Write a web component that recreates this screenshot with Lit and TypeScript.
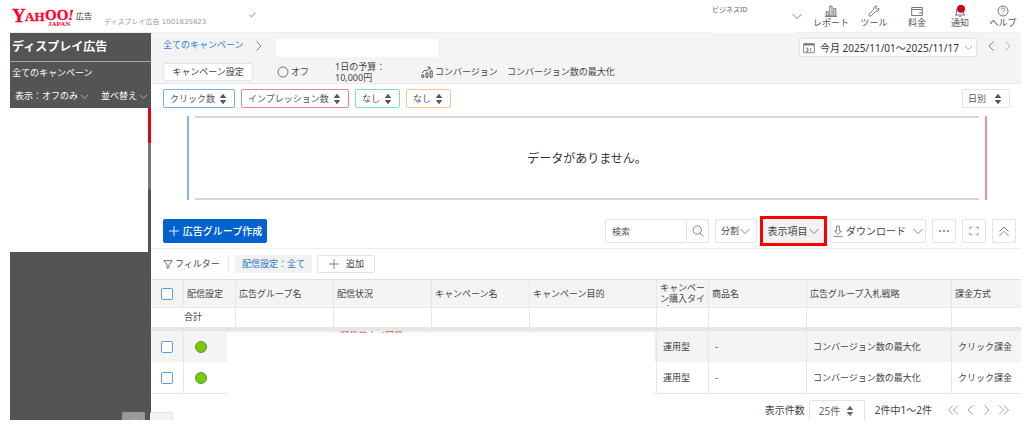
import { LitElement, html, css, svg, nothing } from "lit";
import { customElement, property } from "lit/decorators.js";

const shapes: Record<string, unknown> = {
  down: svg`<path d="M1.5 4 6 8.500 10.5 4"/>`,
  left: svg`<path d="M8.5 1.5 4 6l4.500 4.500"/>`,
  right: svg`<path d="M3.500 1.500 8 6l-4.500 4.500"/>`,
  first: svg`<path d="M6 1.500 1.500 6 6 10.500M11 1.500 6.500 6l4.500 4.500"/>`,
  last: svg`<path d="M1 1.500 5.500 6 1 10.500M6 1.500 10.500 6 6 10.500"/>`,
  top: svg`<path d="M1.500 6.500 6 2l4.500 4.500M1.500 10.800 6 6.300l4.500 4.500"/>`,
  check: svg`<path d="M2 6.500 5 9l5-6"/>`,
  plus: svg`<path d="M6 1v10M1 6h10"/>`,
  sort: svg`<path d="M6 .8 9.300 4.900H2.700zM6 11.200 2.700 7.100h6.600z" fill="currentColor" stroke="none"/>`,
  circle: svg`<circle cx="6" cy="6" r="5"/>`,
  search: svg`<circle cx="5.200" cy="5" r="4.200"/><path d="m8.200 8.200 3.300 3.300"/>`,
  filter: svg`<path d="M1 2h10L7.400 6.800v3L4.800 11.300V6.800z"/>`,
  download: svg`<path d="M4.600 1v5H2.500L6 9.500 9.500 6H7.400V1zM1.500 11.400h9"/>`,
  dots: svg`<path d="M1 6h2M5 6h2M9 6h2" stroke-width="1.300"/>`,
  full: svg`<path d="M1 4V1.500h3M8 1.500h3V4M11 8v2.500H8M4 10.500H1V8"/>`,
  report: svg`<path d="M1.200 6.500h2v4.500h-2zM4.800 1h2.200v10H4.800zM8.800 3.500h2V11h-2zM0 11.400h12"/>`,
  tool: svg`<path d="M10.800 3.200 9 4.500 7.500 3 8.900 1.200C7 .6 5.200 2 5.700 4.300L1 9.200c-.8 1 .8 2.600 1.800 1.800l4.900-4.700c2.300.5 3.900-1.200 3.100-3.100z"/>`,
  card: svg`<path d="M.7 2.500h10.600v8H.7zM.7 4.500h10.600M8 8h3"/>`,
  bell: svg`<path d="M2.500 9V5.500C2.500 1 9.500 1 9.500 5.500V9l1.300 1H1.200zM4.800 11.300h2.400"/><circle cx="7" cy="3.800" r="4" fill="#d0021b" stroke="none"/>`,
  help: svg`<circle cx="6" cy="6" r="5"/><path d="M4.300 4.700c0-2.200 3.400-2.200 3.400 0C7.700 6 6 5.800 6 7.200M6 8.400v1"/>`,
  calendar: svg`<path d="M.7 1.800h10.600v9H.7z"/><path d="M.7 2.500h10.600" stroke-width="2"/><path d="M3 6.200h2v3.300H3M3.500 7.800H5M7.700 6v3.700"/>`,
  trend: svg`<path d="M.8 9h2v2.300h-2zM5 7h2v4.300H5zM9.200 5h2v6.300h-2zM1 7l3-3 1.500 1.200L9 1.500M6.500 1.200H9v2.400"/>`,
};

@customElement("ui-icon")
class UiIcon extends LitElement {
  @property() name = "down";
  static styles = css`
    :host { display: inline-flex; flex: none; width: 12px; height: 12px; }
    svg { width: 100%; height: 100%; fill: none; stroke: currentColor; stroke-width: 0.9; }
  `;
  render() {
    return html`<svg viewBox="0 0 12 12" aria-hidden="true">${shapes[this.name]}</svg>`;
  }
}

const nav = [
  ["report", "レポート"],
  ["tool", "ツール"],
  ["card", "料金"],
  ["bell", "通知"],
  ["help", "ヘルプ"],
];

const metrics = [
  ["クリック数", "blue"],
  ["インプレッション数", "pink"],
  ["なし", "teal"],
  ["なし", "orange"],
];

const columns = [
  ["配信設定", "c-set"],
  ["広告グループ名", "c-name"],
  ["配信状況", "c-mid"],
  ["キャンペーン名", "c-mid"],
  ["キャンペーン目的", "c-goal"],
  ["キャンペーン購入タイプ", "c-type"],
  ["商品名", "c-mid"],
  ["広告グループ入札戦略", "c-bid"],
  ["課金方式", "c-pay"],
];

const rows = [
  { status: "配信停止（配信", type: "運用型", product: "-", bid: "コンバージョン数の最大化", pay: "クリック課金" },
  { status: "", type: "運用型", product: "-", bid: "コンバージョン数の最大化", pay: "クリック課金" },
];

@customElement("app-root")
class AppRoot extends LitElement {
  static styles = css`
    :host {
      display: block;
      padding: 0 3px 0 10px;
      background: #fff;
      color: #444;
      font: 9px/12px "Noto Sans", "Noto Sans CJK JP", sans-serif;
    }
    * { box-sizing: border-box; }
    button, select, input { margin: 0; font: inherit; color: inherit; border-radius: 2px; }
    button { display: flex; align-items: center; justify-content: center; padding: 0; background: #fff; border: 1px solid #e3e3e3; white-space: nowrap; }
    button ui-icon { color: #777; }
    a { color: inherit; text-decoration: none; }
    .plain { border: 0; background: none; }
    .icon9 { width: 9px; height: 9px; }
    .icon10 { width: 10px; height: 10px; }
    .spacer { flex: 1; }

    header { display: flex; height: 33px; border-bottom: 1px solid #eee; color: #555; }
    .logo { width: 64px; height: 24px; margin: 7px 0 0 2px; overflow: visible; }
    .brand { margin: 10px 0 0; font-size: 8px; color: #333; }
    .account { margin: 16px 0 0 12px; font-family: "DejaVu Sans", "Noto Sans CJK JP", sans-serif; font-size: 7px; color: #999; }
    .account-check { margin: 10px 0 0 42px; width: 9px; height: 9px; }
    .business { width: 82px; height: 34px; padding-top: 4px; background: #fff; font-size: 7px; color: #666; white-space: nowrap; }
    .business-more { margin: 10px 10px 0 -3px; height: 12px; }
    nav { display: flex; gap: 7px; }
    nav a { display: flex; flex-direction: column; align-items: center; width: 36px; padding-top: 5px; line-height: 11px; white-space: nowrap; }
    nav ui-icon { color: #666; }

    .body { position: relative; display: grid; grid-template-columns: 141px minmax(0, 1fr); }
    aside { display: flex; flex-direction: column; background: #545454; color: #fff; }
    aside button ui-icon { color: #ddd; }
    h1 { margin: 0; padding: 5px 2px; height: 29px; font-size: 12px; line-height: 18px; border-bottom: 1px solid #a5a5a5; }
    .all { padding: 5px 2px 6px; height: 23px; }
    .side-tools { display: flex; justify-content: space-between; padding: 5px 3px 0 5px; height: 23px; }
    .side-tools button { height: 12px; gap: 2px; }
    .side-list { display: grid; grid-template-columns: 1fr 3px; height: 144px; background: #fff; }
    .scroll { display: flex; flex-direction: column; background: #545454; }
    .scroll-hot { height: 35px; background: #e60012; }
    .scroll-thumb { height: 46px; background: #777; }

    .campaign { height: 51px; background: #f4f4f4; border-bottom: 1px solid #e8e8e8; padding: 5px 5px 0 12px; }
    .crumbs, .facts, .metrics, .toolbar, .filters, .pager { display: flex; align-items: center; }
    .crumbs { height: 19px; }
    .crumbs a { color: #2f7fd0; padding-bottom: 6px; }
    .crumbs .sep { margin: 0 11px 4px 9px; color: #777; }
    .blank { width: 162px; height: 18px; background: #fff; }
    .date { height: 19px; padding: 0 3px; font-size: 10px; gap: 5px; margin-right: 5px; color: #333; }
    .step { width: 17px; height: 12px; margin-bottom: 3px; }
    .step.off ui-icon { color: #aaa; }
    .facts { height: 29px; padding-top: 1px; }
    .settings { width: 90px; height: 18px; }
    .state { display: flex; align-items: center; gap: 2px; margin-left: 24px; width: 58px; }
    .state ui-icon { color: #666; }
    .budget { width: 86px; line-height: 11px; }
    .goal { display: flex; align-items: center; gap: 2px; width: 86px; white-space: nowrap; }

    .metrics { padding: 5px 11px 4px 12px; gap: 6px; height: 28px; }
    .pick { position: relative; display: inline-flex; align-items: center; height: 19px; border: 1px solid #e3e3e3; border-radius: 2px; background: #fff; color: #555; }
    .pick select { appearance: none; height: 100%; border: 0; background: none; padding: 0 18px 0 6px; outline: none; }
    .pick ui-icon { position: absolute; right: 5px; pointer-events: none; }
    .pick.blue { border-color: #76b1e8; }
    .pick.pink { border-color: #f07f9b; }
    .pick.teal { border-color: #76dede; }
    .pick.orange { border-color: #f8c68c; }
    .pick.wide select { padding: 0 22px 0 5px; }

    .chart { display: flex; justify-content: space-between; gap: 6px; margin: 4px 34px 19px 36px; height: 84px; }
    .axis { width: 2px; background: #7fb5e6; }
    .axis.alt { background: #f28ba6; }
    .plot { flex: 1; display: grid; place-items: center; padding-top: 1px; border: solid #d5d5d5; border-width: 2px 0; font-size: 12px; color: #333; }

    .toolbar { gap: 6px; padding: 0 5px 0 12px; height: 30px; align-items: flex-start; border-bottom: 1px solid #eee; }
    .toolbar button { height: 24px; }
    .toolbar .create { width: 104px; background: #0062ce; border-color: #0062ce; color: #fff; font-size: 10px; font-weight: 500; gap: 3px; }
    .toolbar .create ui-icon { color: #fff; }
    .search { display: flex; }
    .search input { width: 81px; height: 24px; padding: 0 6px; border: 1px solid #e3e3e3; border-right: 0; border-radius: 2px 0 0 2px; outline: none; }
    .search input::placeholder { color: #555; opacity: 1; }
    .search button { width: 23px; }
    .toolbar .split { width: 42px; }
    .toolbar .items { width: 61px; background: #f2f2f2; font-size: 10px; outline: 3px solid #f00; border-color: #f2f2f2; border-radius: 0; }
    .toolbar .load { width: 96px; font-size: 10px; gap: 2px; }
    .load .more { margin-left: 4px; }
    .toolbar .square { width: 24px; }

    .filters { height: 30px; padding: 0 12px; }
    .filter-label { display: flex; align-items: center; gap: 2px; width: 66px; height: 18px; border-right: 1px solid #e8e8e8; }
    .chip { width: 77px; height: 18px; margin: 0 5px 0 6px; background: #f2f2f2; border: 0; color: #2676cc; }
    .add { width: 58px; height: 18px; gap: 6px; font-size: 9px; }

    .grid { position: relative; }
    table { width: 100%; table-layout: fixed; border-collapse: separate; border-spacing: 0; }
    th, td { padding: 0 0 0 3px; border-right: 1px solid #e6e6e6; font-weight: 400; text-align: left; white-space: nowrap; }
    th:last-child, td:last-child { border-right: 0; }
    thead th { height: 29px; background: #f4f4f4; border-top: 1px solid #e0e0e0; border-bottom: 1px solid #e8e8e8; }
    .c-box { width: 33px; }
    .c-set { width: 52px; }
    .c-name { width: 98px; }
    .c-mid { width: 98px; }
    .c-goal { width: 127px; }
    .c-type { width: 52px; }
    .c-bid { width: 145px; }
    .clamp { height: 25px; padding-top: 1px; line-height: 11px; overflow: hidden; white-space: normal; }
    .total td { height: 23px; border-bottom: 4px solid #e6e6e6; }
    .total .sum { padding: 0 0 2px 33px; }
    .row td { height: 31px; padding-left: 6px; }
    .row.odd td { background: #f4f4f4; }
    .row.even td { height: 32px; border-bottom: 1px solid #e6e6e6; }
    .row td.status { vertical-align: top; color: #e2332e; line-height: 9px; }
    th.c-box, .row td.c-box, .row td.dot { padding: 0; text-align: center; }
    .row td.dot { padding-right: 18px; border-right: 0; }
    input[type="checkbox"] { appearance: none; display: block; width: 12px; height: 12px; margin: auto; border: 1px solid #5b9ce0; background: #fff; }
    .on { display: block; width: 12px; height: 12px; margin: auto; border-radius: 50%; background: #76cc00; border: 1px solid #6a8a48; }
    .hidden-cells { position: absolute; left: 76px; top: 54px; bottom: 0; width: 427px; background: #fff; }

    .pager { height: 26px; padding: 6px 12px 0; justify-content: flex-end; overflow: hidden; font-size: 10px; }
    .pager .pick { height: 20px; margin: 0 10px 0 4px; border-bottom: 0; border-radius: 2px 2px 0 0; color: #666; }
    .pager .pick select { padding: 0 23px 0 9px; }
    .pager .pick ui-icon { right: 8px; }
    .pages { display: flex; gap: 7px; margin-left: 16px; }
    .pages button { width: 10px; height: 12px; }
    .pages ui-icon { color: #999; }
    .tabs { position: absolute; left: 112px; bottom: 0; display: flex; gap: 5px; }
    .tab { width: 23px; height: 8px; align-items: flex-start; overflow: hidden; border: 0; background: #999; border-radius: 2px 2px 0 0; }
    .tab.light { background: #f4f4f4; border: solid #e3e3e3; border-width: 1px 1px 0 0; }
    .tab ui-icon { margin-top: 5px; width: 8px; height: 8px; color: #ccc; }
  `;

  private pick(label: string, name: string, tone = "") {
    return html`<span class="pick ${tone}">
      <select aria-label=${name}><option>${label}</option></select>
      <ui-icon name="sort"></ui-icon>
    </span>`;
  }

  private row(r: (typeof rows)[number], i: number) {
    return html`<tr class="row ${i % 2 ? "even" : "odd"}">
      <td class="c-box"><input type="checkbox" aria-label="選択" /></td>
      <td class="dot"><span class="on"></span></td>
      <td></td>
      <td class="status">${r.status || nothing}</td>
      <td></td>
      <td></td>
      <td>${r.type}</td>
      <td>${r.product}</td>
      <td>${r.bid}</td>
      <td>${r.pay}</td>
    </tr>`;
  }

  render() {
    return html`
      <header lang="ja">
        <svg class="logo" viewBox="0 0 64 24" fill="#ff0033" stroke="#ff0033" stroke-width=".3"
          font-family="Liberation Serif, serif" font-weight="700" role="img" aria-label="Yahoo! JAPAN">
          <text x="0" y="15" font-size="19">Y</text>
          <text x="13" y="14" font-size="13">AH</text>
          <text x="33" y="13" font-size="15">OO</text>
          <text x="56" y="13" font-size="15" font-style="italic">!</text>
          <text x="36" y="19" font-size="7" stroke-width="0">JAPAN</text>
        </svg>
        <span class="brand">広告</span>
        <span class="account">ディスプレイ広告 1001835823</span>
        <ui-icon class="account-check" name="check"></ui-icon>
        <span class="spacer"></span>
        <span class="business">ビジネスID</span>
        <button class="plain business-more" aria-label="アカウント"><ui-icon name="down"></ui-icon></button>
        <nav>${nav.map(([icon, label]) => html`<a href="#"><ui-icon name=${icon}></ui-icon>${label}</a>`)}</nav>
      </header>

      <div class="body" lang="ja">
        <aside>
          <h1>ディスプレイ広告</h1>
          <a class="all" href="#">全てのキャンペーン</a>
          <div class="side-tools">
            <button class="plain">表示：オフのみ<ui-icon class="icon9" name="down"></ui-icon></button>
            <button class="plain">並べ替え<ui-icon class="icon9" name="down"></ui-icon></button>
          </div>
          <div class="side-list">
            <div></div>
            <div class="scroll"><div class="scroll-hot"></div><div class="scroll-thumb"></div></div>
          </div>
        </aside>

        <main>
          <section class="campaign">
            <div class="crumbs">
              <a href="#">全てのキャンペーン</a>
              <ui-icon class="sep" name="right"></ui-icon>
              <div class="blank"></div>
              <span class="spacer"></span>
              <button class="date">
                <ui-icon name="calendar"></ui-icon><span>今月 2025/11/01～2025/11/17</span><ui-icon class="icon9" name="down"></ui-icon>
              </button>
              <button class="plain step" aria-label="前へ"><ui-icon name="left"></ui-icon></button>
              <button class="plain step off" aria-label="次へ"><ui-icon name="right"></ui-icon></button>
            </div>
            <div class="facts">
              <button class="settings">キャンペーン設定</button>
              <span class="state"><ui-icon name="circle"></ui-icon>オフ</span>
              <span class="budget">1日の予算：<br />10,000円</span>
              <span class="goal"><ui-icon name="trend"></ui-icon>コンバージョン</span>
              <span>コンバージョン数の最大化</span>
            </div>
          </section>

          <div class="metrics">
            ${metrics.map(([label, tone]) => this.pick(label, "指標", tone))}
            <span class="spacer"></span>
            ${this.pick("日別", "期間の単位", "wide")}
          </div>

          <div class="chart">
            <div class="axis"></div>
            <div class="plot">データがありません。</div>
            <div class="axis alt"></div>
          </div>

          <div class="toolbar">
            <button class="create"><ui-icon name="plus"></ui-icon>広告グループ作成</button>
            <span class="spacer"></span>
            <div class="search">
              <input type="text" placeholder="検索" aria-label="検索" />
              <button aria-label="検索する"><ui-icon name="search"></ui-icon></button>
            </div>
            <button class="split">分割<ui-icon name="down"></ui-icon></button>
            <button class="items">表示項目<ui-icon name="down"></ui-icon></button>
            <button class="load"><ui-icon name="download"></ui-icon>ダウンロード<ui-icon class="more" name="down"></ui-icon></button>
            <button class="square" aria-label="その他"><ui-icon name="dots"></ui-icon></button>
            <button class="square" aria-label="全画面"><ui-icon class="icon10" name="full"></ui-icon></button>
            <button class="square" aria-label="閉じる"><ui-icon name="top"></ui-icon></button>
          </div>

          <div class="filters">
            <span class="filter-label"><ui-icon class="icon10" name="filter"></ui-icon>フィルター</span>
            <button class="chip">配信設定：全て</button>
            <button class="add"><ui-icon name="plus"></ui-icon>追加</button>
          </div>

          <div class="grid">
            <table>
              <thead>
                <tr>
                  <th class="c-box"><input type="checkbox" aria-label="全て選択" /></th>
                  ${columns.map(([label, size]) => html`<th class=${size}>${size === "c-type" ? html`<div class="clamp">${label}</div>` : label}</th>`)}
                </tr>
              </thead>
              <tbody>
                <tr class="total">
                  <td class="sum" colspan="2">合計</td>
                  ${columns.slice(1).map(() => html`<td></td>`)}
                </tr>
                ${rows.map((r, i) => this.row(r, i))}
              </tbody>
            </table>
            <div class="hidden-cells"></div>
          </div>

          <div class="pager">
            <span>表示件数</span>
            ${this.pick("25件", "表示件数")}
            <span>2件中1～2件</span>
            <div class="pages">
              ${["first", "left", "right", "last"].map((n) => html`<button class="plain" aria-label=${n}><ui-icon name=${n}></ui-icon></button>`)}
            </div>
          </div>
        </main>

        <div class="tabs">
          <button class="tab" aria-label="サイドバーを閉じる"><ui-icon name="first"></ui-icon></button>
          <button class="tab light" aria-label="一覧を閉じる"><ui-icon name="first"></ui-icon></button>
        </div>
      </div>
    `;
  }
}
